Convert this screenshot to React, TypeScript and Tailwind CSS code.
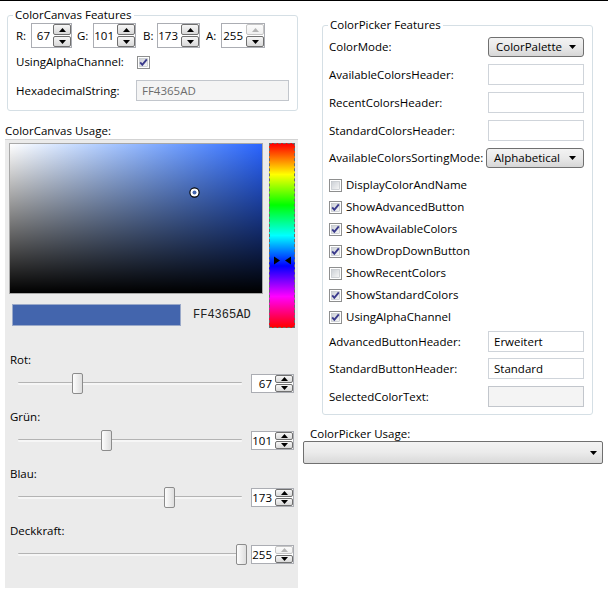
import React from "react";

const font = "font-['Open_Sans',sans-serif]";

const Tri: React.FC<{ dir: "up" | "down"; disabled?: boolean; w?: number }> = ({ dir, disabled, w = 7 }) => (
  <svg width={w} height={4} viewBox="0 0 7 4" className="block">
    <polygon
      points={dir === "up" ? "0,4 3.5,0 7,4" : "0,0 7,0 3.5,4"}
      fill={disabled ? "#b4b4b4" : "#000"}
    />
  </svg>
);

const SpinBtn: React.FC<{ dir: "up" | "down"; disabled?: boolean }> = ({ dir, disabled }) => (
  <div
    className={`flex-1 flex items-center justify-center rounded-[2px] border bg-linear-to-b ${
      disabled
        ? "border-[#c5c5c5] from-[#fbfbfb] to-[#f0f0f0]"
        : "border-[#707070] from-[#f6f6f6] to-[#d9d9d9]"
    }`}
  >
    <Tri dir={dir} disabled={disabled} />
  </div>
);

// numeric up/down box
const Spin: React.FC<{ value: number; cls: string; upDisabled?: boolean }> = ({ value, cls, upDisabled }) => (
  <div className={`flex bg-white border border-[#abadb3] ${cls}`}>
    <div className="flex-1 flex items-center justify-end pr-[3px] leading-none">{value}</div>
    <div className="w-[18px] flex flex-col gap-[1px] py-[0px]">
      <SpinBtn dir="up" disabled={upDisabled} />
      <SpinBtn dir="down" />
    </div>
  </div>
);

const Check: React.FC<{ on?: boolean }> = ({ on }) => (
  <svg width={13} height={13} viewBox="0 0 13 13" className="block shrink-0">
    <defs>
      <linearGradient id="cbg" x1="0" y1="0" x2="1" y2="1">
        <stop offset="0" stopColor="#cbcfd5" />
        <stop offset="1" stopColor="#f7f7f7" />
      </linearGradient>
    </defs>
    <rect x="0.5" y="0.5" width="12" height="12" fill="#fff" stroke="#8e8f8f" />
    <rect x="2.5" y="2.5" width="8" height="8" fill="url(#cbg)" stroke="#b8bcc2" strokeWidth="0.6" />
    {on && (
      <path d="M3.2 6.4 L5.3 8.8 L9.8 3.3" fill="none" stroke="#3a3a8c" strokeWidth="1.9" />
    )}
  </svg>
);

const Combo: React.FC<{ text: string; cls: string }> = ({ text, cls }) => (
  <div
    className={`flex items-center justify-between rounded-[3px] border border-[#707070] bg-linear-to-b from-[#f3f3f3] via-[#e9e9e9] to-[#d6d6d6] pl-[7px] pr-[7px] ${cls}`}
  >
    <span>{text}</span>
    <Tri dir="down" />
  </div>
);

const TextBox: React.FC<{ text?: string; disabled?: boolean; cls: string }> = ({ text, disabled, cls }) => (
  <div
    className={`flex items-center px-[5px] border ${
      disabled ? "bg-[#f4f4f4] border-[#c2c6cc] text-[#6d6d6d]" : "bg-white border-[#cfd4da]"
    } ${cls}`}
  >
    {text}
  </div>
);

const sliders = [
  { label: "Rot:", value: 67 },
  { label: "Grün:", value: 101 },
  { label: "Blau:", value: 173 },
  { label: "Deckkraft:", value: 255 },
];

const checks = [
  { name: "DisplayColorAndName", on: false },
  { name: "ShowAdvancedButton", on: true },
  { name: "ShowAvailableColors", on: true },
  { name: "ShowDropDownButton", on: true },
  { name: "ShowRecentColors", on: false },
  { name: "ShowStandardColors", on: true },
  { name: "UsingAlphaChannel", on: true },
];

const Row: React.FC<{ label: string; children: React.ReactNode; cls?: string }> = ({ label, children, cls }) => (
  <div className={`flex items-center justify-between ${cls ?? ""}`}>
    <span>{label}</span>
    {children}
  </div>
);

export default function App() {
  return (
    <div className={`w-[608px] h-[612px] overflow-hidden bg-white border-t border-black text-[11.5px] text-black flex ${font}`}>
      {/* Left column */}
      <div className="w-[303px] flex flex-col">
        {/* ColorCanvas Features */}
        <div className="relative ml-[7px] mt-[14px] w-[291px] h-[96px] border border-[#d5dfe5] rounded-[3px] pl-[8px] pt-[7px]">
          <span className="absolute -top-[9px] left-[5px] px-[2px] bg-white leading-[16px]">ColorCanvas Features</span>
          <div className="flex items-center h-[25px]">
            <span className="w-[15px]">R:</span>
            <Spin value={67} cls="w-[41px] h-[25px]" />
            <span className="ml-[5px] w-[16px]">G:</span>
            <Spin value={101} cls="w-[43px] h-[25px]" />
            <span className="ml-[7px] w-[14px]">B:</span>
            <Spin value={173} cls="w-[43px] h-[25px]" />
            <span className="ml-[6px] w-[15px]">A:</span>
            <Spin value={255} cls="w-[44px] h-[25px]" upDisabled />
          </div>
          <div className="flex items-center h-[16px] mt-[6px]">
            <span className="w-[121px]">UsingAlphaChannel:</span>
            <Check on />
          </div>
          <div className="flex items-center h-[21px] mt-[10px]">
            <span className="w-[120px]">HexadecimalString:</span>
            <TextBox text="FF4365AD" disabled cls="w-[153px] h-[21px]" />
          </div>
        </div>

        <div className="ml-[5px] mt-[12px] leading-[16px]">ColorCanvas Usage:</div>

        {/* ColorCanvas panel */}
        <div className="ml-[5px] w-[293px] h-[449px] bg-[#ebebeb] border-t border-[#d3d3d3] pl-[4px] pt-[3px]">
          <div className="flex">
            <div className="flex flex-col">
              <div className="relative w-[254px] h-[151px] border border-[#a8a8a8] bg-linear-to-r from-white to-[#2a64ff]">
                <div className="absolute inset-0 bg-linear-to-t from-black to-transparent" />
                <svg width={11} height={11} viewBox="0 0 11 11" className="absolute left-[179px] top-[43px]">
                  <circle cx="5.5" cy="5.5" r="4.6" fill="#fff" stroke="#000" strokeWidth="1.1" />
                  <circle cx="5.5" cy="5.5" r="2" fill="#4365ad" />
                </svg>
              </div>
              <div className="flex items-center mt-[10px]">
                <div className="ml-[3px] w-[169px] h-[22px] bg-[#4365ad] border border-[#9aa9c9]" />
                <span className="ml-[12px] font-['Liberation_Mono',monospace] text-[12px] text-[#222]">FF4365AD</span>
              </div>
            </div>
            <div className="relative ml-[6px] w-[26px] h-[185px] border border-dashed border-[#6a6a6a] bg-[linear-gradient(to_bottom,#ff0000,#ffff00,#00ff00,#00ffff,#0000ff,#ff00ff,#ff0000)]">
              <svg width={24} height={9} viewBox="0 0 24 9" className="absolute left-[0px] top-[112px]">
                <polygon points="4,0.5 10,4.5 4,8.5" fill="#000" />
                <polygon points="21,0.5 15,4.5 21,8.5" fill="#000" />
              </svg>
            </div>
          </div>

          {/* sliders */}
          <div className="mt-[24px] pl-[1px]">
            {sliders.map((s, i) => (
              <div key={s.label} className={i === 0 ? "" : "mt-[15px]"}>
                <div className="leading-[16px]">{s.label}</div>
                <div className="flex items-start mt-[5px] h-[21px]">
                  <div className="relative ml-[3px] w-[234px] h-[21px]">
                    <div className="absolute left-[5px] right-[5px] top-[9px] h-[3px] rounded-[1px] border-t border-[#b3b3b3] bg-[#f6f6f6]" />
                    <div
                      className="absolute top-0 w-[11px] h-[21px] rounded-[2px] border border-[#8c8c8c] bg-linear-to-r from-[#fdfdfd] to-[#dedede]"
                      style={{ left: Math.round((s.value / 255) * 223) }}
                    />
                  </div>
                  <Spin value={s.value} cls="ml-[4px] mt-[1px] w-[43px] h-[19px]" upDisabled={s.value === 255} />
                </div>
              </div>
            ))}
          </div>
        </div>
      </div>

      {/* Right column */}
      <div className="flex-1 flex flex-col">
        <div className="relative ml-[19px] mt-[24px] w-[271px] h-[390px] border border-[#d5dfe5] rounded-[3px] pl-[6px] pr-[8px] pt-[11px]">
          <span className="absolute -top-[9px] left-[5px] px-[2px] bg-white leading-[16px]">ColorPicker Features</span>
          <Row label="ColorMode:">
            <Combo text="ColorPalette" cls="w-[96px] h-[20px]" />
          </Row>
          <Row label="AvailableColorsHeader:" cls="mt-[7px]">
            <TextBox cls="w-[96px] h-[21px]" />
          </Row>
          <Row label="RecentColorsHeader:" cls="mt-[7px]">
            <TextBox cls="w-[96px] h-[21px]" />
          </Row>
          <Row label="StandardColorsHeader:" cls="mt-[7px]">
            <TextBox cls="w-[96px] h-[21px]" />
          </Row>
          <Row label="AvailableColorsSortingMode:" cls="mt-[7px]">
            <Combo text="Alphabetical" cls="w-[98px] h-[20px]" />
          </Row>
          <div className="mt-[6px]">
            {checks.map((c) => (
              <div key={c.name} className="flex items-center gap-[4px] h-[22px]">
                <Check on={c.on} />
                <span>{c.name}</span>
              </div>
            ))}
          </div>
          <Row label="AdvancedButtonHeader:" cls="mt-[3px]">
            <TextBox text="Erweitert" cls="w-[96px] h-[21px]" />
          </Row>
          <Row label="StandardButtonHeader:" cls="mt-[6px]">
            <TextBox text="Standard" cls="w-[96px] h-[21px]" />
          </Row>
          <Row label="SelectedColorText:" cls="mt-[7px]">
            <TextBox disabled cls="w-[96px] h-[21px]" />
          </Row>
        </div>

        <div className="ml-[7px] mt-[12px] leading-[14px]">ColorPicker Usage:</div>
        <div className="w-[300px] h-[23px] flex items-center justify-end pr-[5px] rounded-[2px] border border-[#707070] bg-linear-to-b from-[#f3f3f3] via-[#ebebeb] to-[#d9d9d9]">
          <Tri dir="down" />
        </div>
      </div>
    </div>
  );
}
